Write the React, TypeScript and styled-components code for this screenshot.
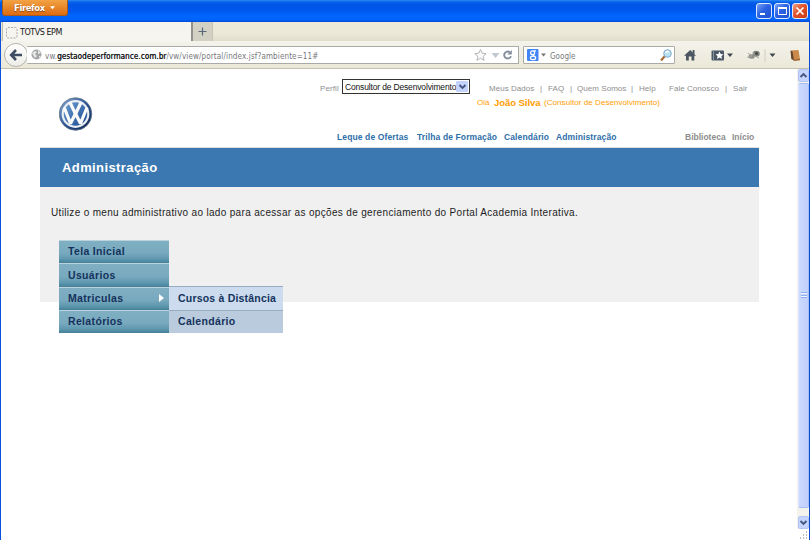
import React from "react";
import styled, { createGlobalStyle, css } from "styled-components";

const Global = createGlobalStyle`
  * { box-sizing: border-box; }
  html, body { margin: 0; padding: 0; overflow: hidden; background: #fff; }
  body { font-family: "Liberation Sans", Arial, sans-serif; }
`;

const Window = styled.div`
  width: 810px;
  height: 540px;
  display: flex;
  flex-direction: column;
  overflow: hidden;
  background: #fff;
`;

const TitleBar = styled.header`
  height: 22px;
  flex: none;
  display: flex;
  justify-content: space-between;
  padding: 0 2px;
  background: linear-gradient(#2a8cf5 0, #0a62ea 2px, #0055e5 5px, #0058ee 11px, #0066ff 16px, #0064fb 20px, #0046d0 22px);
`;

const FirefoxButton = styled.button`
  width: 66px;
  height: 16px;
  padding: 0 0 0 11px;
  display: flex;
  align-items: center;
  gap: 5px;
  border: 1px solid #a85b1b;
  border-top: 0;
  border-radius: 0 0 3px 3px;
  background: linear-gradient(#f2a344, #e8872a 50%, #dc6b12);
  color: #fff;
  font: bold 8.5px "DejaVu Sans", sans-serif;
  letter-spacing: -0.4px;
  text-shadow: 0 1px 1px #874512;
`;

const Controls = styled.div`
  display: flex;
  gap: 2px;
  padding-top: 3px;
`;

const ControlButton = styled.button<{ $close?: boolean }>`
  width: 16px;
  height: 16px;
  padding: 0;
  display: flex;
  border: 1px solid #dfeaff;
  border-radius: 3px;
  background: ${(p) =>
    p.$close
      ? "linear-gradient(135deg, #f0a083, #e0532c 45%, #c83d14)"
      : "linear-gradient(135deg, #7ba4f5, #2c63e2 45%, #1f51cf)"};
`;

const Frame = styled.div`
  flex: 1;
  min-height: 0;
  display: flex;
  flex-direction: column;
  border-left: 1px solid #0a52dc;
  border-right: 1px solid #0a4bd0;
`;

const TabStrip = styled.div`
  height: 19px;
  flex: none;
  display: flex;
  background: linear-gradient(#ece9d8, #ece9d9 60%, #e0decb);
`;

const Tab = styled.div`
  width: 191px;
  margin-left: 1px;
  padding: 2px 0 0 3px;
  display: flex;
  align-items: center;
  gap: 2px;
  border-left: 1px solid #bdbbb0;
  border-right: 2px solid #92928c;
  background: linear-gradient(#f5f4ee, #f6f5f0);
  color: #161616;
  font: 8px "DejaVu Sans", sans-serif;
  letter-spacing: -0.45px;
`;

const NewTab = styled.div`
  width: 20px;
  display: flex;
  align-items: center;
  justify-content: center;
  background: #d3d1c4;
  border-right: 1px solid #c5c3b5;
`;

const NavBar = styled.div`
  height: 28px;
  flex: none;
  display: flex;
  align-items: center;
  padding-left: 3px;
  background: linear-gradient(#f4f3ec, #ebe8d8);
  border-bottom: 1px solid #c3c0ad;
`;

const BackButton = styled.button`
  width: 24px;
  height: 24px;
  padding: 0;
  flex: none;
  display: flex;
  align-items: center;
  justify-content: center;
  border: 1px solid #b4b4b2;
  border-radius: 50%;
  background: linear-gradient(#fff, #eeede8);
`;

const field = css`
  height: 18px;
  display: flex;
  align-items: center;
  background: #fff;
  border: 1px solid #aaaaa6;
  border-radius: 1px;
  font-family: "DejaVu Sans Condensed", "DejaVu Sans", sans-serif;
  font-size: 8px;
  white-space: nowrap;
`;

const AddressField = styled.div`
  ${field};
  width: 492px;
  margin-left: -1px;
  border-left: 0;
  padding: 0 5px 0 4px;
`;

const Url = styled.span`
  flex: 1;
  margin-left: 3px;
  padding-top: 3px;
  color: #77777a;
  letter-spacing: 0.13px;
  b {
    color: #202020;
    font-weight: normal;
    letter-spacing: 0.09px;
    text-shadow: 0.3px 0 #202020;
  }
`;

const SearchField = styled.div`
  ${field};
  width: 152px;
  margin-left: 4px;
  padding: 0 2px 0 3px;
  gap: 4px;
  color: #77777a;
`;

const SearchHint = styled.span`
  flex: 1;
  padding-top: 3px;
`;

const ToolIcons = styled.div`
  flex: 1;
  display: flex;
`;

const Viewport = styled.div`
  flex: 1;
  min-height: 0;
  display: flex;
`;

const Page = styled.main`
  flex: 1;
  min-width: 0;
  padding: 0 38px 0 39px;
`;

const PageHeader = styled.div`
  height: 79px;
  display: flex;
  border-bottom: 1px solid #dedede;
`;

const LogoBox = styled.div`
  width: 280px;
  padding: 28px 0 0 19px;
`;

const HeaderRight = styled.div`
  flex: 1;
  display: grid;
  grid-template-rows: 15px 17px 37px;
  padding-top: 10px;
`;

const HeaderRow = styled.div<{ $start?: number; $end?: boolean }>`
  display: flex;
  align-items: ${(p) => (p.$end ? "flex-end" : "center")};
  padding-left: ${(p) => p.$start ?? 0}px;
  padding-bottom: ${(p) => (p.$end ? 5 : 0)}px;
  white-space: nowrap;
`;

const SmallLink = styled.a<{ $w: number; $ls?: number }>`
  flex: none;
  width: ${(p) => p.$w}px;
  color: #8e8e8e;
  font-size: 8px;
  line-height: 10px;
  padding-top: 4px;
  letter-spacing: ${(p) => p.$ls ?? 0.05}px;
`;

const RoleSelect = styled.div`
  width: 128px;
  height: 15px;
  flex: none;
  margin-right: 19px;
  padding: 0 1px 0 2px;
  display: flex;
  align-items: center;
  justify-content: space-between;
  border: 1px solid #333;
  background: #fff;
  color: #111;
  font-size: 8.5px;
  letter-spacing: -0.16px;
`;

const DropArrow = styled.span`
  width: 12px;
  height: 11px;
  flex: none;
  display: flex;
  justify-content: center;
  background: #c3d3fb;
  border-radius: 1px;
`;

const Greeting = styled.span<{ $w: number; $name?: boolean }>`
  flex: none;
  width: ${(p) => p.$w}px;
  color: #ff9c00;
  font-size: ${(p) => (p.$name ? 9.5 : 8)}px;
  font-weight: ${(p) => (p.$name ? "bold" : "normal")};
  line-height: 12px;
  letter-spacing: ${(p) => (p.$name ? -0.05 : 0.06)}px;
`;

const NavLink = styled.a<{ $w: number; $muted?: boolean }>`
  flex: none;
  width: ${(p) => p.$w}px;
  color: ${(p) => (p.$muted ? "#8d8d8d" : "#2e6ea8")};
  font-size: 8.5px;
  font-weight: bold;
  line-height: 12px;
  letter-spacing: ${(p) => (p.$muted ? 0 : 0.12)}px;
`;

const Banner = styled.h1`
  margin: 0;
  height: 39px;
  padding: 0 0 0 22px;
  display: flex;
  align-items: center;
  background: #3b78b1;
  color: #fff;
  font: bold 13px "Liberation Sans", Arial, sans-serif;
  letter-spacing: 0.4px;
`;

const Panel = styled.section`
  height: 115px;
  padding: 19px 0 0 11px;
  background: #f0f0f0;
`;

const Intro = styled.p`
  margin: 0;
  height: 34px;
  color: #1d1d1d;
  font-size: 10px;
  line-height: 14px;
  letter-spacing: 0.33px;
  white-space: nowrap;
`;

const MenuArea = styled.nav`
  display: flex;
  align-items: flex-end;
  padding-left: 8px;
`;

const Menu = styled.ul`
  width: 110px;
  margin: 0;
  padding: 0;
  list-style: none;
`;

const menuRow = css`
  display: flex;
  align-items: center;
  justify-content: space-between;
  color: #14325c;
  font-size: 10.5px;
  font-weight: bold;
  letter-spacing: 0.34px;
  line-height: 12px;
  white-space: nowrap;
`;

const MenuItem = styled.li<{ $h: number }>`
  ${menuRow};
  height: ${(p) => p.$h}px;
  padding: 0 5px 2px 9px;
  background: linear-gradient(#80afc3, #78a9be 55%, #6099b0 80%, #448199);
  border-top: 1px solid #b9d2dc;
`;

const Submenu = styled(Menu)`
  width: 114px;
`;

const SubItem = styled.li<{ $active?: boolean; $h: number }>`
  ${menuRow};
  height: ${(p) => p.$h}px;
  padding: 0 0 2px 9px;
  background: ${(p) => (p.$active ? "#ccdcee" : "#b9cbdd")};
  border-top: 1px solid #98abc1;
  letter-spacing: ${(p) => (p.$active ? 0.2 : 0.33)}px;
`;

const ScrollColumn = styled.div`
  width: 12px;
  display: flex;
  flex-direction: column;
  align-items: flex-end;
  background: #f3f2ec;
`;

const ScrollButton = styled.button`
  width: 11px;
  height: 13px;
  padding: 0;
  flex: none;
  border: 1px solid #b3c6f3;
  border-radius: 2px;
  background: #c5d4fc;
  display: flex;
`;

const Thumb = styled.div`
  width: 11px;
  height: 425px;
  margin-top: 1px;
  display: flex;
  align-items: center;
  justify-content: center;
  border: 1px solid #a4bdf2;
  border-left-color: #dce6ff;
  border-radius: 2px;
  background: linear-gradient(90deg, #cbd9fe, #c0d0fb);
`;

const Track = styled.div`
  height: 8px;
`;

const Corner = styled.div`
  flex: 1;
  width: 12px;
  background: #fff;
  display: flex;
  align-items: flex-end;
`;

const ArrowIcon = ({ up = false }: { up?: boolean }) => (
  <svg width="9" height="11" viewBox="0 0 9 11">
    <path d={up ? "M1.5 7 4.5 4 7.5 7" : "M1.5 4 4.5 7 7.5 4"} fill="none" stroke="#43587f" strokeWidth="1.9" />
  </svg>
);

const VwLogo = () => (
  <svg width="35" height="35" viewBox="0 0 35 35">
    <defs>
      <linearGradient id="ring" x1="0" y1="0" x2="1" y2="1">
        <stop offset="0" stopColor="#8fb0d4" />
        <stop offset=".45" stopColor="#2f5b9c" />
        <stop offset="1" stopColor="#0a1f48" />
      </linearGradient>
      <linearGradient id="disc" x1="0" y1="0" x2="1" y2="1">
        <stop offset="0" stopColor="#6fa0d3" />
        <stop offset="1" stopColor="#17468f" />
      </linearGradient>
    </defs>
    <circle cx="16.5" cy="17" r="16.3" fill="url(#ring)" stroke="#66768c" strokeWidth=".8" />
    <circle cx="16.5" cy="17" r="12.8" fill="url(#disc)" stroke="#e9edf1" strokeWidth="2.2" />
    <g fill="none" stroke="#fbfbfb" strokeWidth="3.2" strokeLinejoin="bevel">
      <path d="M11 5.5 16.5 17 22 5.5" />
      <path d="M5.2 10.5 11.5 26.5 16.5 16.500 21.5 26.5 28 10.5" />
    </g>
  </svg>
);

const ToolbarIcons = () => (
  <svg width="125" height="26" viewBox="0 0 125 26">
    <path d="M9 13.8 15.200 8 21 13.8H19.300V18.5H16.500V14.5H13.800V18.5H11V13.8Z" fill="#4d5762" />
    <path d="M17.600 8H19.500V12H17.600Z" fill="#4d5762" />
    <rect x="36.5" y="8.5" width="12.5" height="10" rx="1" fill="#4c5866" />
    <path d="M38.5 9V18" stroke="#8a939d" />
    <path d="m44.5 9.5 1.2 2.6 2.7.2-2 1.9.6 2.8-2.5-1.5-2.5 1.5.6-2.8-2-1.9 2.7-.2Z" fill="#fff" />
    <path d="M52 11.5H58L55 15Z" fill="#3f464e" />
    <g fill="#81837f">
      <ellipse cx="81.2" cy="11.7" rx="3.6" ry="3" />
      <ellipse cx="76.5" cy="14.5" rx="3" ry="2.2" fill="#8d9089" />
    </g>
    <path d="m73 11 4 3-5 1.5m6 1.5 2-3 4 2M78 10l2 3" fill="none" stroke="#a4a59f" />
    <circle cx="81.5" cy="11.5" r="1.5" fill="#454744" />
    <path d="M90 7V20" stroke="#d0cec2" />
    <path d="M94.5 11.5H100.5L97.5 15Z" fill="#3f464e" />
    <path d="M116 8.5 123.5 8 125 17.5 118.5 18.5Z" fill="#c98a4b" />
    <path d="M115.5 8.5 117.5 9.5 119 18.5 116.3 17Z" fill="#64442b" />
    <path d="M119 17.8 125 16.8V18.2L119 19Z" fill="#9d602c" />
  </svg>
);

export default function App() {
  return (
    <>
      <Global />
      <Window>
        <TitleBar>
          <FirefoxButton>
            Firefox
            <svg width="5" height="4" viewBox="0 0 6 4"><path d="M0 0H6L3 3.5Z" fill="#fff" /></svg>
          </FirefoxButton>
          <Controls>
            <ControlButton aria-label="Minimizar">
              <svg width="14" height="14"><path d="M3 10H8" stroke="#fff" strokeWidth="2" /></svg>
            </ControlButton>
            <ControlButton aria-label="Maximizar">
              <svg width="14" height="14"><path d="M3.5 4V10.5H11.5V4M3 4H12" fill="none" stroke="#fff" /><path d="M3 4H12" stroke="#fff" strokeWidth="2" /></svg>
            </ControlButton>
            <ControlButton $close aria-label="Fechar">
              <svg width="14" height="14"><path d="m3.5 3.5 7 7m0-7-7 7" stroke="#fff" strokeWidth="1.7" /></svg>
            </ControlButton>
          </Controls>
        </TitleBar>
        <Frame>
          <TabStrip>
            <Tab>
              <svg width="12" height="12"><rect x=".5" y=".5" width="10.5" height="10.5" rx="1.5" fill="none" stroke="#aaaaa6" strokeDasharray="2 1.2" /></svg>
              TOTVS EPM
            </Tab>
            <NewTab>
              <svg width="9" height="9"><path d="M.5 4.5H8.5M4.5 .5V8.5" stroke="#59677a" strokeWidth="1.2" /></svg>
            </NewTab>
          </TabStrip>
          <NavBar>
            <BackButton aria-label="Voltar">
              <svg width="14" height="12"><path d="M7 1 2.2 6 7 11M2.5 6H13" fill="none" stroke="#3e4d63" strokeWidth="2.6" /></svg>
            </BackButton>
            <AddressField>
              <svg width="11" height="11">
                <circle cx="5.5" cy="5.5" r="5" fill="#a3a5a6" />
                <path d="M1 4 4 2 6 3 4 5 6 7 4 9ZM7 1 10 4 7 5ZM8 7 10 7 8 9Z" fill="#e8e8e8" />
              </svg>
              <Url>vw.<b>gestaodeperformance.com.br</b>/vw/view/portal/index.jsf?ambiente=11#</Url>
              <svg width="39" height="14">
                <path d="m6.5 1.5 1.7 3.7 4 .4-3 2.7.9 4-3.6-2.1L2.9 12.3l.9-4-3-2.7 4-.4Z" fill="#fafafa" stroke="#b2b5b8" />
                <path d="M17.5 5H25.5L21.5 10Z" fill="#c3c9ce" />
                <path d="M37 8.2A3.5 3.5 0 1 1 35.8 4.2" fill="none" stroke="#848e9b" strokeWidth="1.9" />
                <path d="M37.8 2V6.5H33.3Z" fill="#848e9b" />
              </svg>
            </AddressField>
            <SearchField>
              <svg width="19" height="12">
                <rect width="11.5" height="12" rx="1" fill="#4285f4" />
                <g fill="none" stroke="#fff" strokeWidth="1.3">
                  <ellipse cx="5.6" cy="3.8" rx="2" ry="1.9" />
                  <ellipse cx="6" cy="8.9" rx="2.6" ry="1.8" />
                  <path d="M6.5 1.9H9M6 5.7 7 7" />
                </g>
                <path d="M14 4.5H19L16.5 7.5Z" fill="#777" />
              </svg>
              <SearchHint>Google</SearchHint>
              <svg width="12" height="12">
                <path d="M1 11.5 5 7" stroke="#a86c36" strokeWidth="2.2" />
                <circle cx="7.5" cy="4.5" r="3.8" fill="#b9e2f7" stroke="#7fa8c8" />
                <path d="M5.5 3.5Q7 1.8 9 3" stroke="#fff" strokeWidth="1.5" fill="none" />
              </svg>
            </SearchField>
            <ToolIcons><ToolbarIcons /></ToolIcons>
          </NavBar>
          <Viewport>
            <Page>
              <PageHeader>
                <LogoBox><VwLogo /></LogoBox>
                <HeaderRight>
                  <HeaderRow>
                    <SmallLink $w={22} $ls={0.1}>Perfil</SmallLink>
                    <RoleSelect>
                      Consultor de Desenvolvimento
                      <DropArrow><ArrowIcon /></DropArrow>
                    </RoleSelect>
                    <SmallLink $w={51}>Meus Dados</SmallLink>
                    <SmallLink $w={8}>|</SmallLink>
                    <SmallLink $w={22}>FAQ</SmallLink>
                    <SmallLink $w={7}>|</SmallLink>
                    <SmallLink $w={54}>Quem Somos</SmallLink>
                    <SmallLink $w={8}>|</SmallLink>
                    <SmallLink $w={30}>Help</SmallLink>
                    <SmallLink $w={56}>Fale Conosco</SmallLink>
                    <SmallLink $w={8}>|</SmallLink>
                    <SmallLink $w={20}>Sair</SmallLink>
                  </HeaderRow>
                  <HeaderRow $start={157}>
                    <Greeting $w={17}>Olá</Greeting>
                    <Greeting $w={50} $name>João Silva</Greeting>
                    <Greeting $w={120}>(Consultor de Desenvolvimento)</Greeting>
                  </HeaderRow>
                  <HeaderRow $start={17} $end>
                    <NavLink $w={80}>Leque de Ofertas</NavLink>
                    <NavLink $w={87}>Trilha de Formação</NavLink>
                    <NavLink $w={52}>Calendário</NavLink>
                    <NavLink $w={129}>Administração</NavLink>
                    <NavLink $w={47} $muted>Biblioteca</NavLink>
                    <NavLink $w={24} $muted>Início</NavLink>
                  </HeaderRow>
                </HeaderRight>
              </PageHeader>
              <Banner>Administração</Banner>
              <Panel>
                <Intro>Utilize o menu administrativo ao lado para acessar as opções de gerenciamento do Portal Academia Interativa.</Intro>
                <MenuArea>
                  <Menu>
                    <MenuItem $h={23}>Tela Inicial</MenuItem>
                    <MenuItem $h={24}>Usuários</MenuItem>
                    <MenuItem $h={23}>
                      Matriculas
                      <svg width="5" height="8"><path d="M0 0 5 4 0 8Z" fill="#fff" /></svg>
                    </MenuItem>
                    <MenuItem $h={23}>Relatórios</MenuItem>
                  </Menu>
                  <Submenu>
                    <SubItem $active $h={24}>Cursos à Distância</SubItem>
                    <SubItem $h={23}>Calendário</SubItem>
                  </Submenu>
                </MenuArea>
              </Panel>
            </Page>
            <ScrollColumn>
              <ScrollButton aria-label="Subir"><ArrowIcon up /></ScrollButton>
              <Thumb>
                <svg width="6" height="7"><path d="M0 .5H6M0 3.5H6M0 5.5H6" stroke="#8fb0f2" /><path d="M0 1.5H6M0 4.5H6" stroke="#eff4ff" /></svg>
              </Thumb>
              <Track />
              <ScrollButton aria-label="Descer"><ArrowIcon /></ScrollButton>
              <Corner>
                <svg width="12" height="9"><path d="M9 1h1M6 4h1m2 0h1M3 7h1m2 0h1m2 0h1" stroke="#aaa99f" strokeWidth="1.5" /></svg>
              </Corner>
            </ScrollColumn>
          </Viewport>
        </Frame>
      </Window>
    </>
  );
}
